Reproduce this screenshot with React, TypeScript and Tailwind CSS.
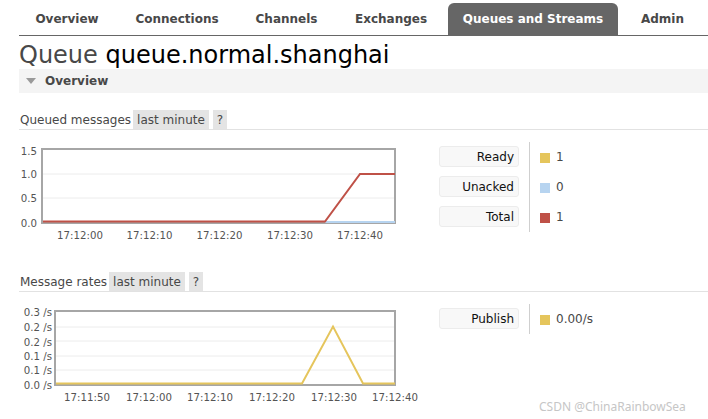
import React from "react";

const tabs = [
  { label: "Overview", w: "w-[96px]" },
  { label: "Connections", w: "w-[116px]" },
  { label: "Channels", w: "w-[95px]" },
  { label: "Exchanges", w: "w-[106px]" },
  { label: "Queues and Streams", w: "w-[170px]", active: true },
  { label: "Admin", w: "w-[81px]" },
];

const FRAME = "#a6a6a6";
const GRID = "#ececec";
const LABEL = "#545454";
const YELLOW = "#e5c55c";
const BLUE = "#b7d4f0";
const RED = "#bf5147";

function QueuedChart() {
  const yLabels = [
    { t: "1.5", y: 21 },
    { t: "1.0", y: 44 },
    { t: "0.5", y: 68 },
    { t: "0.0", y: 93 },
  ];
  const xLabels = [
    { t: "17:12:00", x: 61 },
    { t: "17:12:10", x: 130.5 },
    { t: "17:12:20", x: 200.5 },
    { t: "17:12:30", x: 271 },
    { t: "17:12:40", x: 341 },
  ];
  return (
    <svg width="420" height="142" className="block shrink-0">
      <line x1="24" x2="376" y1="44" y2="44" stroke={GRID} strokeWidth="1" />
      <line x1="24" x2="376" y1="68" y2="68" stroke={GRID} strokeWidth="1" />
      <rect x="23" y="19" width="353" height="74" fill="none" stroke={FRAME} strokeWidth="2" />
      <polyline points="306,92 376,92" fill="none" stroke={BLUE} strokeWidth="2" />
      <polyline points="24,91.5 306,91.5 341,44 376,44" fill="none" stroke={RED} strokeWidth="2" />
      {yLabels.map((l) => (
        <text key={l.t} x="18" y={l.y} textAnchor="end" dominantBaseline="central" fontSize="10.2" fill={LABEL} fontFamily="DejaVu Sans, sans-serif">
          {l.t}
        </text>
      ))}
      {xLabels.map((l) => (
        <text key={l.t} x={l.x} y="105.5" textAnchor="middle" dominantBaseline="central" fontSize="10.2" fill={LABEL} fontFamily="DejaVu Sans, sans-serif">
          {l.t}
        </text>
      ))}
    </svg>
  );
}

function RatesChart() {
  const yLabels = [
    { t: "0.3 /s", y: 20.5 },
    { t: "0.2 /s", y: 35.5 },
    { t: "0.2 /s", y: 50 },
    { t: "0.1 /s", y: 64.5 },
    { t: "0.1 /s", y: 78.5 },
    { t: "0.0 /s", y: 93 },
  ];
  const xLabels = [
    { t: "17:11:50", x: 68 },
    { t: "17:12:00", x: 130 },
    { t: "17:12:10", x: 191 },
    { t: "17:12:20", x: 253 },
    { t: "17:12:30", x: 315 },
    { t: "17:12:40", x: 376 },
  ];
  const grid = [35, 49, 64, 78];
  return (
    <svg width="420" height="142" className="block shrink-0">
      {grid.map((g) => (
        <line key={g} x1="37" x2="376" y1={g} y2={g} stroke={GRID} strokeWidth="1" />
      ))}
      <rect x="36" y="19" width="340" height="74" fill="none" stroke={FRAME} strokeWidth="2" />
      <polyline points="37,91.5 283,91.5 314,34.5 344,91.5 376,91.5" fill="none" stroke={YELLOW} strokeWidth="2" />
      {yLabels.map((l, i) => (
        <text key={i} x="33" y={l.y} textAnchor="end" dominantBaseline="central" fontSize="10.2" fill={LABEL} fontFamily="DejaVu Sans, sans-serif">
          {l.t}
        </text>
      ))}
      {xLabels.map((l) => (
        <text key={l.t} x={l.x} y="105.5" textAnchor="middle" dominantBaseline="central" fontSize="10.2" fill={LABEL} fontFamily="DejaVu Sans, sans-serif">
          {l.t}
        </text>
      ))}
    </svg>
  );
}

function Legend({ rows }: { rows: { label: string; color: string; value: string }[] }) {
  return (
    <div className="mt-[12px] flex self-start">
      <div className="flex w-[80px] flex-col gap-[9px] pt-[4px] pb-[5px]">
        {rows.map((r) => (
          <div
            key={r.label}
            className="flex h-[21px] items-center justify-end rounded-[3px] border border-[#ececec] bg-[#f8f8f8] pr-[4px] text-[12px] text-[#111]"
          >
            {r.label}
          </div>
        ))}
      </div>
      <div className="ml-[10px] w-0 border-l border-[#cfcfcf]" />
      <div className="flex flex-col gap-[9px] pt-[4px] pl-[10px]">
        {rows.map((r) => (
          <div key={r.label} className="flex h-[21px] items-center gap-[6px] text-[12px] text-[#484848]">
            <span className="mt-[2px] block h-[10px] w-[10px]" style={{ backgroundColor: r.color }} />
            <span>{r.value}</span>
          </div>
        ))}
      </div>
    </div>
  );
}

function SectionHeading({ title }: { title: string }) {
  return (
    <div className="flex h-[20px] items-start border-b border-[#e2e2e2] text-[12px] text-[#484848]">
      <span className="pl-[1px] leading-[20px]">{title}</span>
      <span className="ml-[2px] h-[19px] bg-[#e4e4e4] px-[4px] leading-[20px]">last minute</span>
      <span className="ml-[4px] h-[19px] bg-[#e4e4e4] px-[4px] leading-[20px]">?</span>
    </div>
  );
}

export default function App() {
  return (
    <div className="relative h-[419px] w-[708px] overflow-hidden bg-white font-['DejaVu_Sans',sans-serif] text-[#484848]">
      <div className="pl-[19px]">
        <nav className="flex h-[36px] items-end gap-[4px] border-b border-[#666]">
          {tabs.map((t) => (
            <div
              key={t.label}
              className={
                t.active
                  ? `${t.w} flex h-[32px] items-center justify-center rounded-t-[6px] bg-[#666] text-[12px] font-bold text-white`
                  : `${t.w} flex h-[32px] items-center justify-center text-[12px] font-bold text-[#484848]`
              }
            >
              {t.label}
            </div>
          ))}
        </nav>

        <h1 className="mt-[6px] h-[27px] text-[24px] leading-[27px] font-normal">
          <span className="text-[#484848]">Queue</span> <span className="text-black">queue.normal.shanghai</span>
        </h1>

        <div className="flex h-[24px] items-center bg-[#f4f4f4]">
          <svg width="10" height="6" className="ml-[7px] block">
            <polygon points="0,0 10,0 5,6" fill="#9a9a9a" />
          </svg>
          <span className="ml-[9px] text-[12px] font-bold text-[#484848]">Overview</span>
        </div>

        <div className="mt-[17px]">
          <SectionHeading title="Queued messages" />
          <div className="flex h-[142px]">
            <QueuedChart />
            <Legend
              rows={[
                { label: "Ready", color: YELLOW, value: "1" },
                { label: "Unacked", color: BLUE, value: "0" },
                { label: "Total", color: RED, value: "1" },
              ]}
            />
          </div>
          <SectionHeading title="Message rates" />
          <div className="flex h-[127px]">
            <RatesChart />
            <Legend rows={[{ label: "Publish", color: YELLOW, value: "0.00/s" }]} />
          </div>
        </div>
      </div>

      <div className="absolute left-[539px] top-[398px] font-['Noto_Sans',sans-serif] text-[12px] text-[#c6c6c6]">
        CSDN @ChinaRainbowSea
      </div>
    </div>
  );
}
